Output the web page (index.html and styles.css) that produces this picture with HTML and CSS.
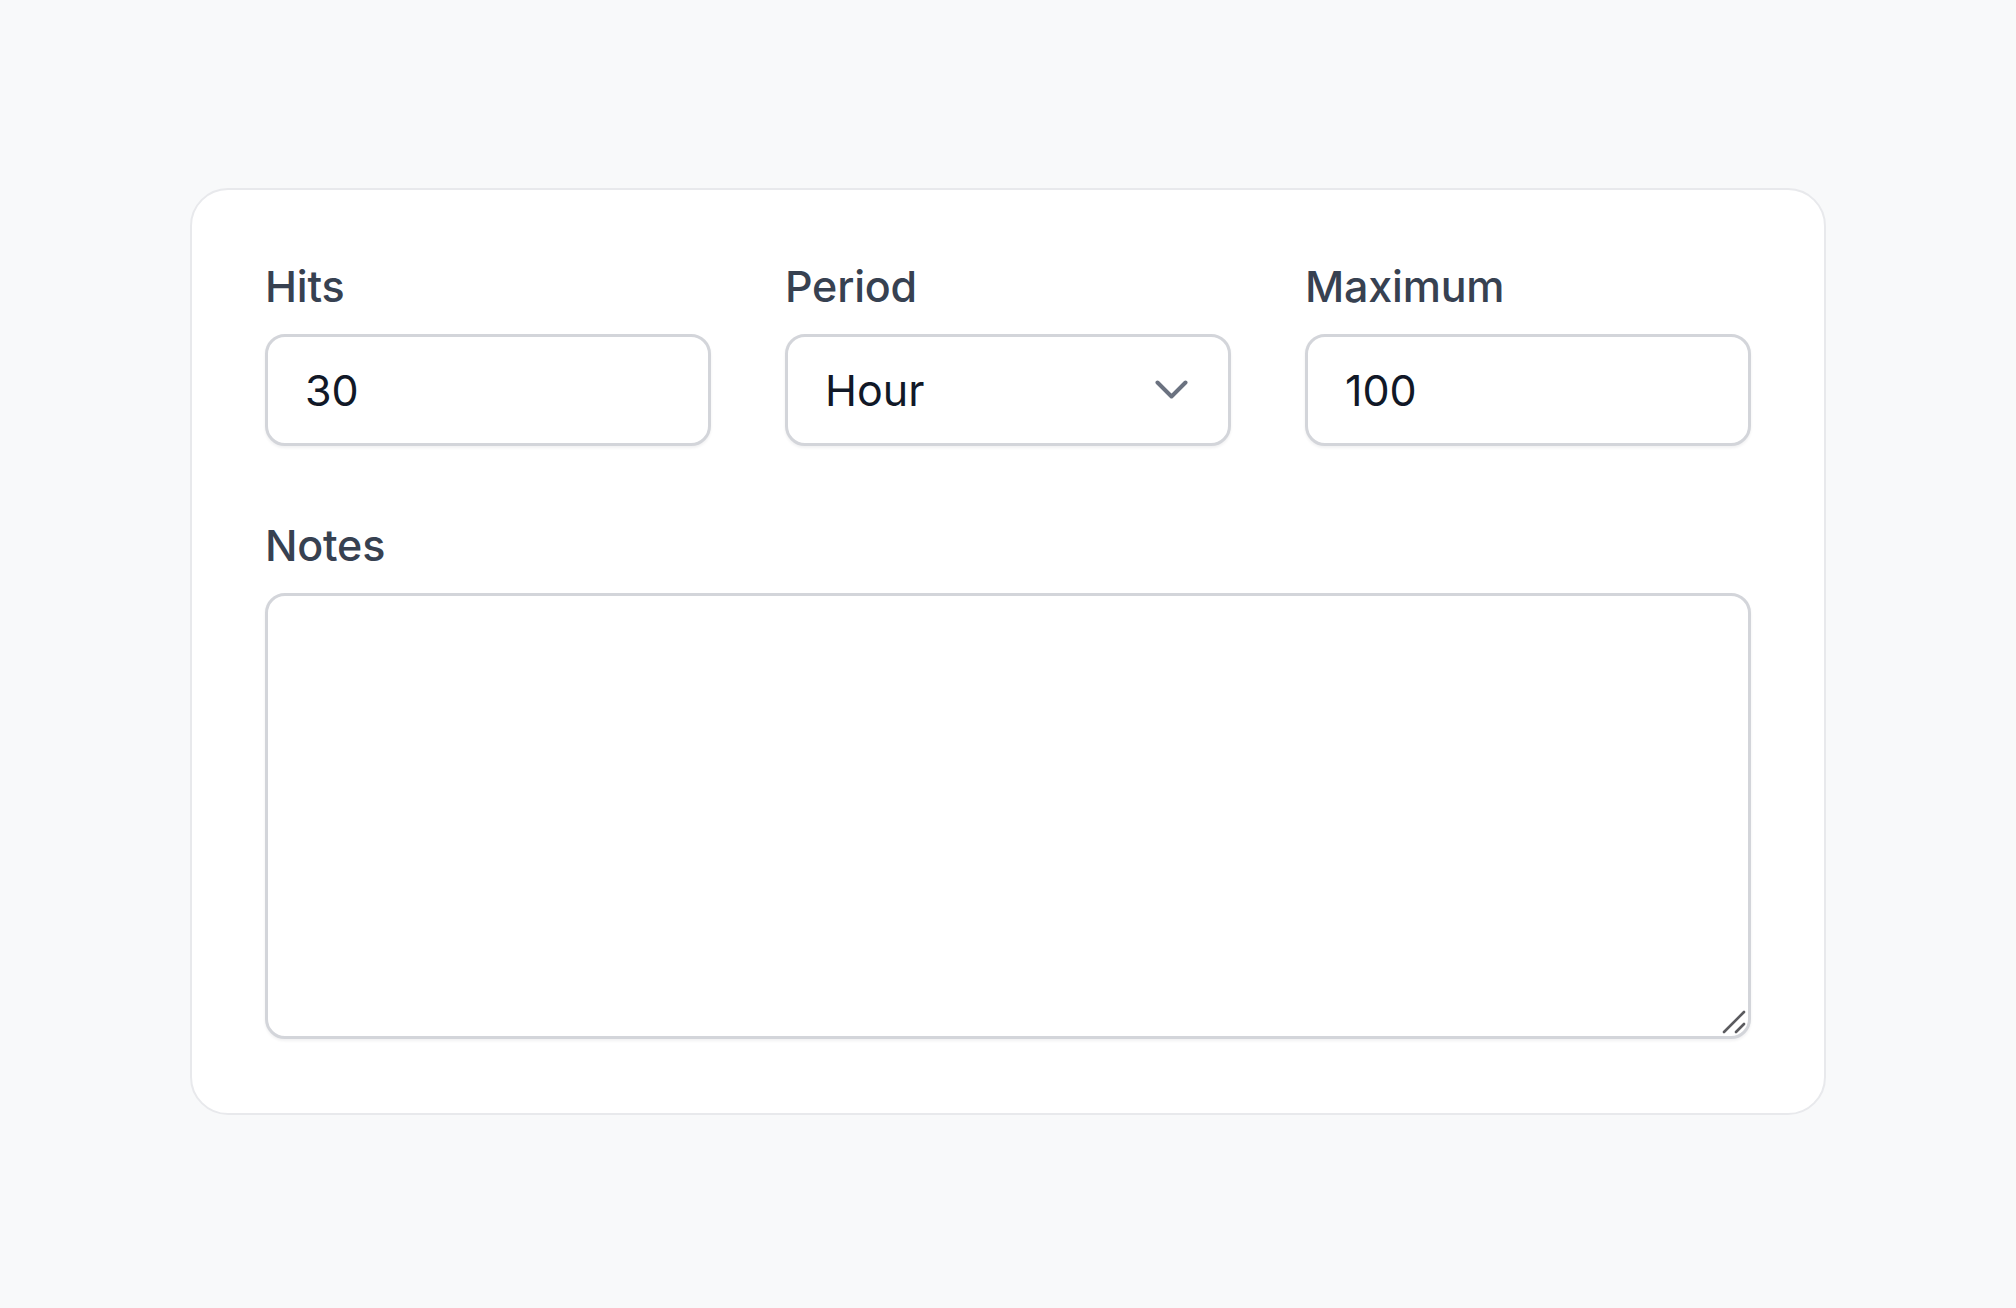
FILE: index.html
```html
<!DOCTYPE html>
<html lang="en">
<head>
<meta charset="utf-8">
<title>Rate limit</title>
<link rel="stylesheet" href="styles.css">
</head>
<body>
<main class="page">
  <section class="card">
    <div class="row">
      <div class="field">
        <label class="label" for="hits">Hits</label>
        <input class="control" id="hits" type="text" value="30">
      </div>
      <div class="field">
        <label class="label" for="period">Period</label>
        <div class="select" id="period">
          <span class="select-value">Hour</span>
          <svg class="chevron" viewBox="0 0 33 20" width="33" height="20" aria-hidden="true">
            <path d="M2.5 2.5 L16.5 16.5 L30.5 2.5" fill="none" stroke="#6b7280" stroke-width="4" stroke-linecap="round" stroke-linejoin="round"/>
          </svg>
        </div>
      </div>
      <div class="field">
        <label class="label" for="max">Maximum</label>
        <input class="control" id="max" type="text" value="100">
      </div>
    </div>
    <div class="field notes">
      <label class="label" for="notes">Notes</label>
      <div class="area-wrap">
        <textarea class="control area" id="notes"></textarea>
        <svg class="grip" viewBox="0 0 26 26" width="26" height="26" aria-hidden="true">
          <path d="M3 23 L23 3 M15 23 L23 15" fill="none" stroke="#5b5b5f" stroke-width="2.6" stroke-linecap="round"/>
        </svg>
      </div>
    </div>
  </section>
</main>
</body>
</html>
```
FILE: styles.css
```css
* { box-sizing: border-box; }
html, body { margin: 0; padding: 0; }
body {
  background: #f8f9fa;
  font-family: Inter, "Noto Sans", sans-serif;
  width: 2016px;
  height: 1308px;
  overflow: hidden;
}
.page {
  padding: 188px 0 0 190px;
}
.card {
  width: 1636px;
  background: #ffffff;
  border: 2px solid #e8e9ec;
  border-radius: 38px;
  padding: 71px 73px 74px 73px;
}
.row {
  display: grid;
  grid-template-columns: repeat(3, 446px);
  column-gap: 74px;
}
.field {
  display: flex;
  flex-direction: column;
  gap: 22px;
}
.notes { margin-top: 74px; }
.label {
  font-size: 43px;
  font-weight: 500;
  color: #374151;
  line-height: 51px;
  letter-spacing: -0.2px;
}
.control {
  display: block;
  height: 112px;
  width: 100%;
  border: 3px solid #d3d5da;
  border-radius: 20px;
  background: #fff;
  box-shadow: 0 2px 3px rgba(17, 24, 39, 0.06);
  padding: 0 37px;
  font-family: inherit;
  font-size: 43px;
  color: #111827;
  outline: none;
}
.select {
  height: 112px;
  border: 3px solid #d3d5da;
  border-radius: 20px;
  background: #fff;
  box-shadow: 0 2px 3px rgba(17, 24, 39, 0.06);
  padding: 0 40px 0 37px;
  display: flex;
  align-items: center;
  justify-content: space-between;
}
.select-value {
  font-size: 43px;
  color: #111827;
}
.chevron { display: block; }
.area-wrap {
  position: relative;
}
.area {
  height: 446px;
  padding: 30px 37px;
  resize: none;
}
.grip {
  position: absolute;
  right: 4px;
  bottom: 4px;
}
```
